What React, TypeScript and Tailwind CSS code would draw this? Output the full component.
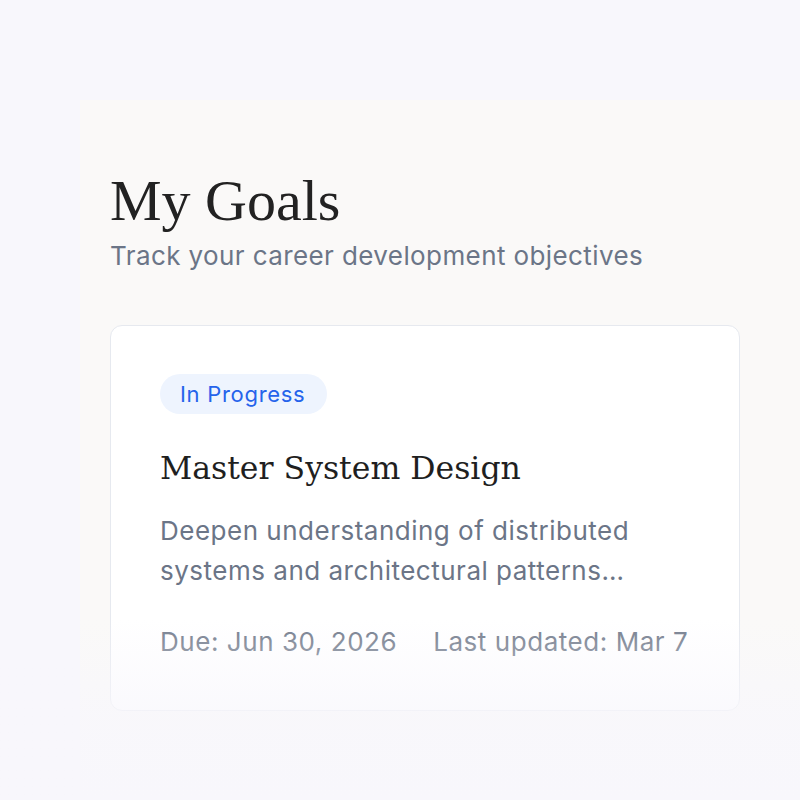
const serif = "font-['Liberation_Serif',serif]";
const cardSerif = "font-['DejaVu_Serif',serif]";
const sans = "font-['Inter','Liberation_Sans',sans-serif]";

const GoalCard = () => {
  return (
    <div className="w-[630px] h-[386px] rounded-xl border border-[#e6e9ef] bg-white px-[49px] pt-[48px]">
      <span className={`inline-flex h-[40px] items-center rounded-full bg-[#eef4fe] pl-5 pr-[22px] text-[22px] tracking-[0.7px] text-[#2563eb] ${sans}`}>
        In Progress
      </span>
      <h2 className={`mt-[32px] text-[31.5px] leading-[44px] text-[#1f1f1f] ${cardSerif}`}>
        Master System Design
      </h2>
      <p className={`mt-[21px] w-[500px] text-[26px] leading-[40px] tracking-[0.5px] text-[#6b7587] ${sans}`}>
        Deepen understanding of distributed systems and architectural patterns…
      </p>
      <div className={`mt-[31px] flex gap-[36px] whitespace-nowrap text-[26px] tracking-[0.55px] text-[#737c8c] ${sans}`}>
        <span className="shrink-0">Due: Jun 30, 2026</span>
        <span className="shrink-0">Last updated: Mar 7</span>
      </div>
    </div>
  );
};

export default function App() {
  return (
    <div className="relative h-[800px] w-[800px] overflow-hidden bg-[#f8f7fc]">
      <div className="ml-[80px] mt-[100px] h-[700px] bg-[#faf9f8] pl-[30px] pt-[68px]">
        <h1 className={`text-[58px] leading-[66px] text-[#222222] ${serif}`}>My Goals</h1>
        <p className={`mt-[5px] text-[26px] leading-[34px] tracking-[0.4px] text-[#6b7587] ${sans}`}>
          Track your career development objectives
        </p>
        <div className="mt-[52px]">
          <GoalCard />
        </div>
      </div>
      <div className="pointer-events-none absolute bottom-0 left-0 h-[180px] w-full bg-gradient-to-b from-transparent via-[#f8f7fc]/70 via-50% to-[#f8f7fc]" />
    </div>
  );
}
